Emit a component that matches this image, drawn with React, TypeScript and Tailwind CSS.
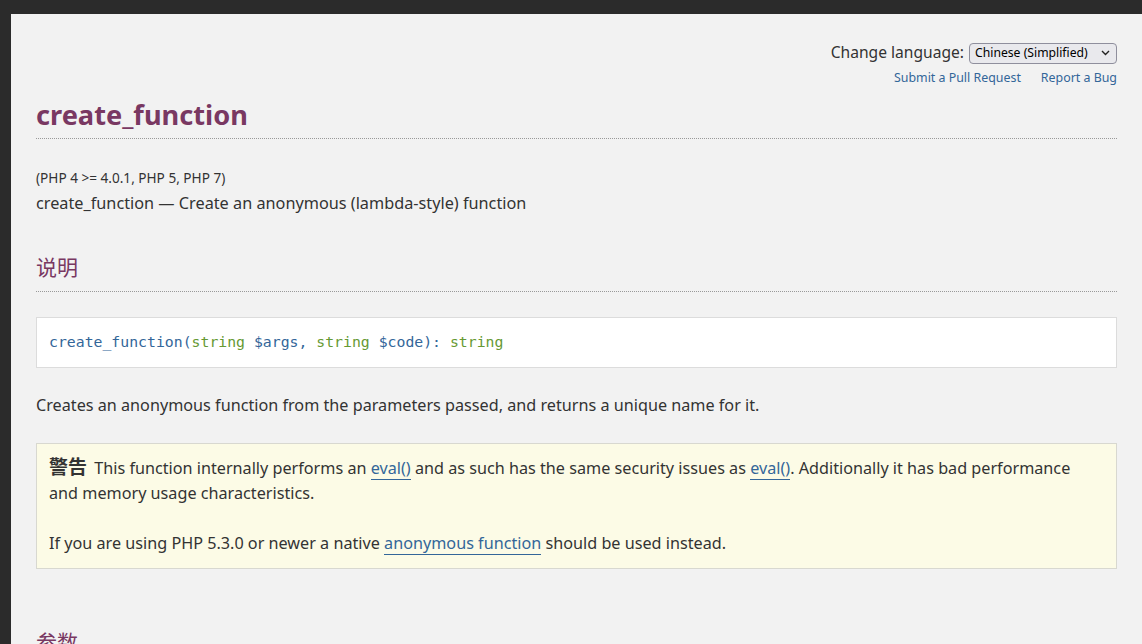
import React from "react";

export default function App() {
  return (
    <div className="w-[1142px] h-[644px] overflow-hidden bg-[#2b2b2b] pt-[14px] pl-[11px]">
      <div
        className="h-[630px] bg-[#f2f2f2] px-[25px] pt-[25px] text-[#333] overflow-hidden"
        style={{ fontFamily: '"Noto Sans", "Noto Sans CJK SC", sans-serif' }}
      >
        <div className="flex flex-col items-end">
          <div className="flex items-center gap-[5px] h-[28px]">
            <span className="text-[15.6px] text-[#333]">Change language:</span>
            <div className="flex items-center justify-between w-[148px] h-[21px] rounded-[4px] border border-[#8f8f9d] bg-[#e9e9ed] pl-[5px] pr-[6px] text-[12.2px] text-black">
              <span>Chinese (Simplified)</span>
              <svg width="9" height="6" viewBox="0 0 9 6" fill="none">
                <path d="M1 1l3.5 3.5L8 1" stroke="#222" strokeWidth="1.4" />
              </svg>
            </div>
          </div>
          <div className="flex gap-[20px] text-[12.4px] text-[#336699] mt-[1px] leading-[20px]">
            <span>Submit a Pull Request</span>
            <span>Report a Bug</span>
          </div>
        </div>

        <h1 className="mt-[9px] text-[27.2px] font-bold text-[#793862] leading-[36px] pb-[5px] border-b border-dotted border-[#999]">
          create_function
        </h1>

        <div className="mt-[29px] text-[13.6px] leading-[20px]">(PHP 4 &gt;= 4.0.1, PHP 5, PHP 7)</div>
        <div className="mt-[2px] text-[16.25px] leading-[26px]">
          create_function — Create an anonymous (lambda-style) function
        </div>

        <h2 className="mt-[36px] text-[21px] leading-[30px] text-[#793862] pb-[9px] border-b border-dotted border-[#999]">
          说明
        </h2>

        <div
          className="mt-[25px] h-[51px] bg-white border border-[#dcdcdc] flex items-center px-[12px] text-[14.8px]"
          style={{ fontFamily: '"DejaVu Sans Mono", "Liberation Mono", monospace' }}
        >
          <span className="text-[#336699]">create_function</span>
          <span className="text-[#336699]">(</span>
          <span className="text-[#669933]">string</span>
          <span className="whitespace-pre text-[#336699]"> $args</span>
          <span className="whitespace-pre text-[#336699]">, </span>
          <span className="text-[#669933]">string</span>
          <span className="whitespace-pre text-[#336699]"> $code</span>
          <span className="whitespace-pre text-[#336699]">): </span>
          <span className="text-[#669933]">string</span>
        </div>

        <p className="mt-[25px] text-[16.2px] leading-[25px]">
          Creates an anonymous function from the parameters passed, and returns a unique name for it.
        </p>

        <div className="mt-[25px] bg-[#fcfbe6] border border-[#d8d8d0] pl-[12px] pr-[24px] pt-[12px] pb-[12px] text-[16.2px] leading-[25px]">
          <p>
            <strong className="text-[19px] leading-[20px] font-bold mr-[3px]">警告</strong>{" "}
            This function internally performs an{" "}
            <span className="text-[#336699] border-b border-[#336699]">eval()</span> and as such has the same security
            issues as <span className="text-[#336699] border-b border-[#336699]">eval()</span>. Additionally it has bad
            performance and memory usage characteristics.
          </p>
          <p className="mt-[25px]">
            If you are using PHP 5.3.0 or newer a native{" "}
            <span className="text-[#336699] border-b border-[#336699]">anonymous function</span> should be used instead.
          </p>
        </div>

        <h2 className="mt-[58px] text-[21px] leading-[30px] text-[#793862]">参数</h2>
      </div>
    </div>
  );
}
